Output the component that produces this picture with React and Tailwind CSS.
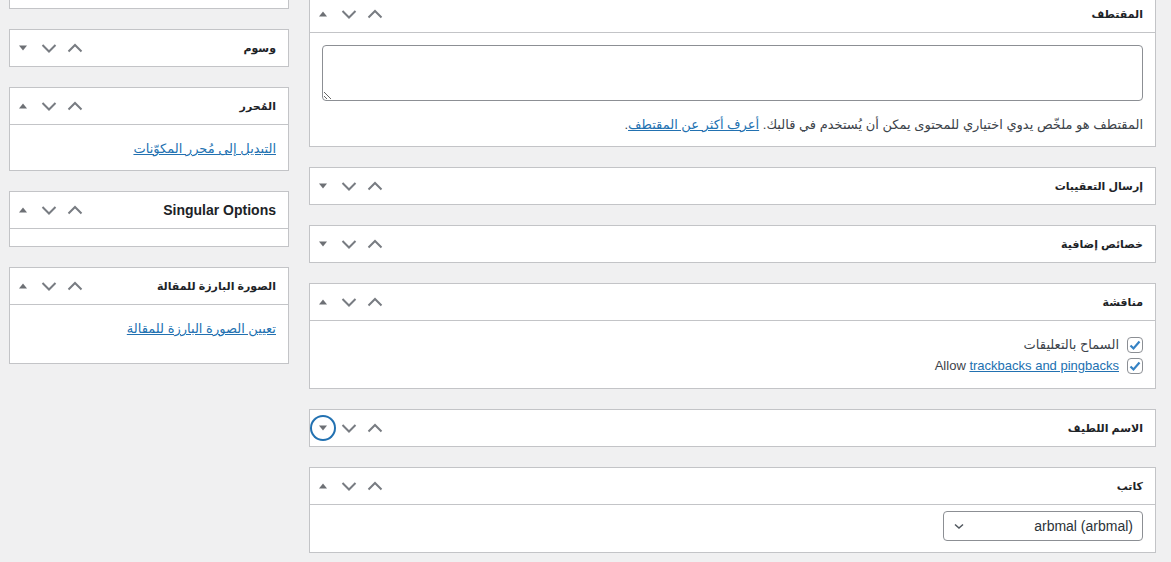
import React from 'react';

const Chevron = ({ up }) => (
  <svg width="20" height="20" viewBox="0 0 20 20" aria-hidden="true">
    <path
      d={up ? 'M3.5 13.5 L10 7 L16.5 13.5' : 'M3.5 7 L10 13.5 L16.5 7'}
      fill="none"
      stroke="#787c82"
      strokeWidth="2"
    />
  </svg>
);

const Triangle = ({ up }) => (
  <svg width="10" height="10" viewBox="0 0 10 10" aria-hidden="true">
    <polygon points={up ? '1,7.5 5,2.5 9,7.5' : '1,2.5 5,7.5 9,2.5'} fill="#6d7075" />
  </svg>
);

const HandleActions = ({ open, focused }) => (
  <div className="flex items-center">
    <button className="w-[26px] h-[26px] flex items-center justify-center">
      <Chevron up />
    </button>
    <button className="w-[26px] h-[26px] flex items-center justify-center">
      <Chevron />
    </button>
    <button
      className={`w-[26px] h-[26px] flex items-center justify-center rounded-full ${
        focused ? 'ring-2 ring-inset ring-[#2271b1]' : ''
      }`}
    >
      <Triangle up={open} />
    </button>
  </div>
);

const Postbox = ({ title, open = true, focused, latin, children }) => (
  <div className="bg-white border border-[#c3c4c7] mb-5">
    <div
      className={`flex items-center justify-between ${
        open ? 'h-[37px] border-b border-[#c3c4c7]' : 'h-9'
      }`}
    >
      <h2
        className={`pr-3 font-bold text-[#1d2327] ${
          latin ? 'text-[14px]' : 'text-[11px]'
        }`}
      >
        {title}
      </h2>
      <HandleActions open={open} focused={focused} />
    </div>
    {open && children}
  </div>
);

const Check = () => (
  <span className="w-4 h-4 shrink-0 rounded-[4px] border border-[#8c8f94] bg-white flex items-center justify-center">
    <svg width="14" height="14" viewBox="0 0 14 14" aria-hidden="true">
      <path d="M2.5 7.5 L5.5 10.5 L11.5 3.5" fill="none" stroke="#3582c4" strokeWidth="2.2" />
    </svg>
  </span>
);

const App = () => {
  return (
    <div
      dir="rtl"
      className="min-h-screen bg-[#f0f0f1] overflow-hidden font-['Liberation_Sans','DejaVu_Sans',sans-serif] text-[13px] text-[#3c434a]"
    >
      <div className="flex gap-5 pr-[15px] pl-[9px]">
        {/* العمود الرئيسي */}
        <main className="w-[847px] -mt-[5px]">
          <Postbox title="المقتطف">
            <div className="px-3 pt-3 pb-3">
              <textarea
                dir="rtl"
                className="block w-full h-[56px] border border-[#8c8f94] rounded-[4px] bg-white"
              />
              <p className="mt-[14px] leading-[19px]">
                المقتطف هو ملخّص يدوي اختياري للمحتوى يمكن أن يُستخدم في قالبك.{' '}
                <a href="#" className="text-[#2271b1] underline">
                  أعرف أكثر عن المقتطف
                </a>
                .
              </p>
            </div>
          </Postbox>

          <Postbox title="إرسال التعقيبات" open={false} />
          <Postbox title="خصائص إضافية" open={false} />

          <Postbox title="مناقشة">
            <div className="px-3 pt-[13px] pb-3">
              <label className="h-[21px] flex items-center gap-[8px]">
                <Check />
                <span>السماح بالتعليقات</span>
              </label>
              <label className="h-[21px] flex items-center gap-[8px]">
                <Check />
                <span dir="ltr">
                  Allow{' '}
                  <a href="#" className="text-[#2271b1] underline">
                    trackbacks and pingbacks
                  </a>
                </span>
              </label>
            </div>
          </Postbox>

          <Postbox title="الاسم اللطيف" open={false} focused />

          <Postbox title="كاتب">
            <div className="px-3 pt-[6px] pb-[11px]">
              <div className="w-[200px] h-[30px] border border-[#8c8f94] rounded-[4px] flex items-center justify-between pr-[9px] pl-[9px] text-[14px] text-[#2c3338]">
                <span dir="ltr">arbmal (arbmal)</span>
                <svg width="12" height="12" viewBox="0 0 12 12" aria-hidden="true">
                  <path d="M2 4.5 L6 8 L10 4.5" fill="none" stroke="#50575e" strokeWidth="1.5" />
                </svg>
              </div>
            </div>
          </Postbox>
        </main>

        {/* الشريط الجانبي */}
        <aside className="w-[280px]">
          <div className="bg-white border border-[#c3c4c7] mb-5 -mt-[40px] h-[49px]" />

          <Postbox title="وسوم" open={false} />

          <Postbox title="المُحرر">
            <div className="px-3 pt-[14px] pb-3 leading-[19px]">
              <a href="#" className="text-[#2271b1] underline">
                التبديل إلى مُحرر المكوّنات
              </a>
            </div>
          </Postbox>

          <Postbox title="Singular Options" latin>
            <div className="h-[17px]" />
          </Postbox>

          <Postbox title="الصورة البارزة للمقالة">
            <div className="px-3 pt-[14px] pb-[25px] leading-[19px]">
              <a href="#" className="text-[#2271b1] underline">
                تعيين الصورة البارزة للمقالة
              </a>
            </div>
          </Postbox>
        </aside>
      </div>
    </div>
  );
};

export default App;
